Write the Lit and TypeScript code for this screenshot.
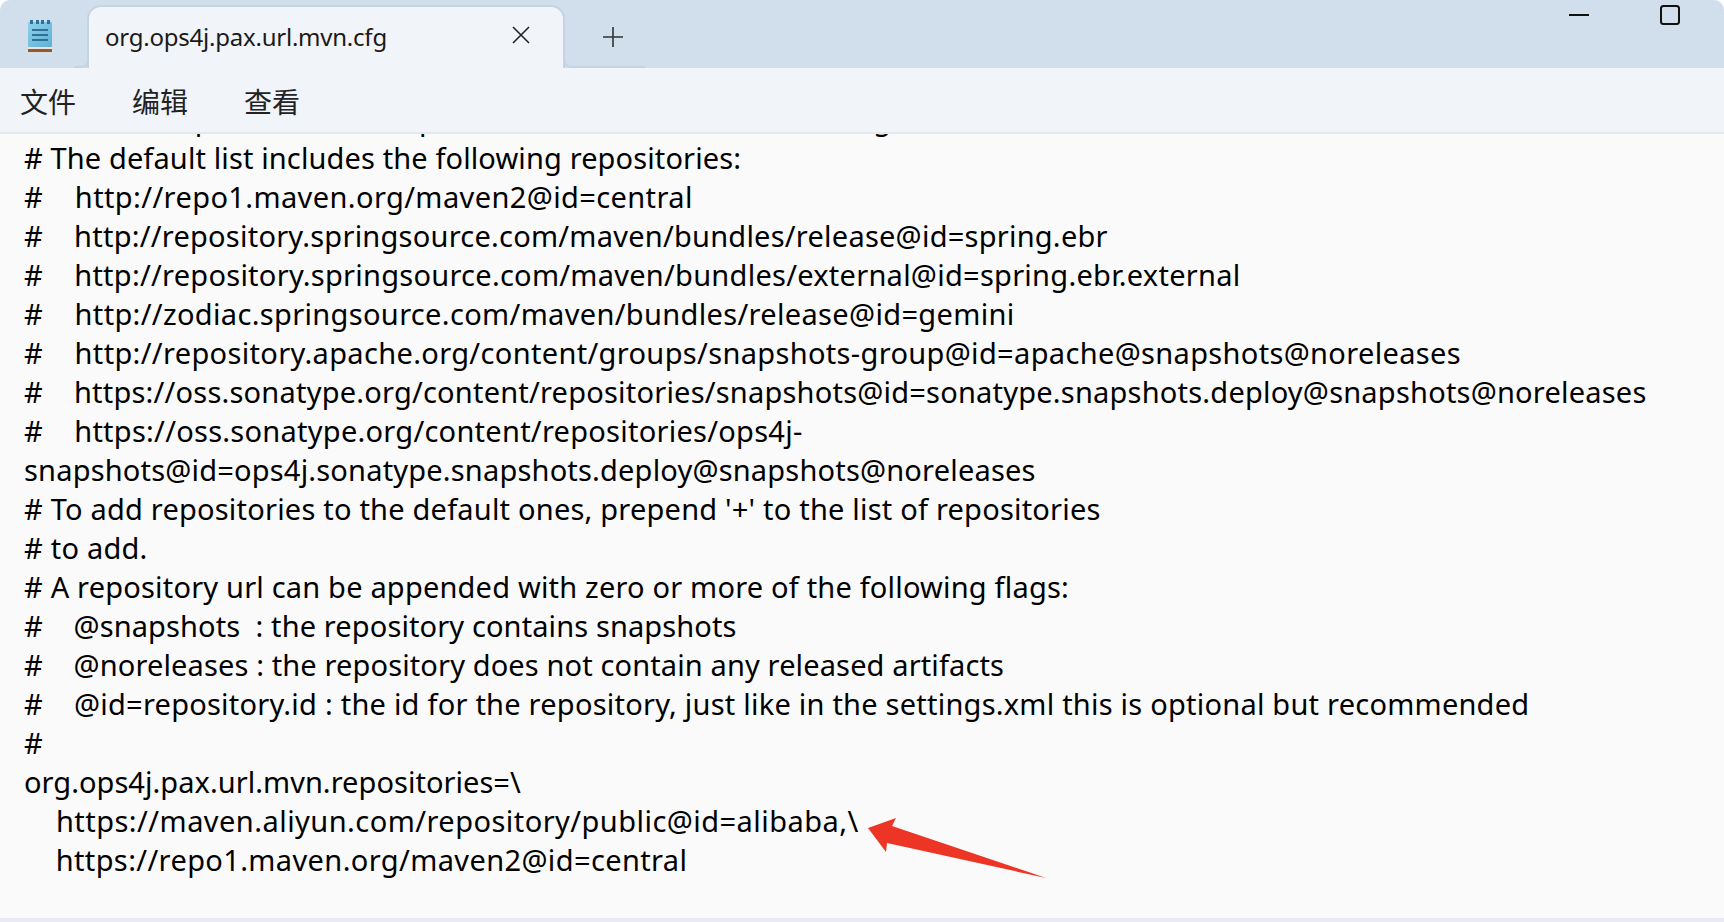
import { LitElement, html, css } from "lit";
import { customElement } from "lit/decorators.js";

const CLIPPED: [string, number] = ["# Comma separated list of repositories scanned when resolving an artifact.", 0.035];
const LINES: [string, number][] = [
  ["# The default list includes the following repositories:", 0.12],
  ["#    http://repo1.maven.org/maven2@id=central", 0.39],
  ["#    http://repository.springsource.com/maven/bundles/release@id=spring.ebr", 0.235],
  ["#    http://repository.springsource.com/maven/bundles/external@id=spring.ebr.external", 0.26],
  ["#    http://zodiac.springsource.com/maven/bundles/release@id=gemini", 0.337],
  ["#    http://repository.apache.org/content/groups/snapshots-group@id=apache@snapshots@noreleases", 0.337],
  ["#    https://oss.sonatype.org/content/repositories/snapshots@id=sonatype.snapshots.deploy@snapshots@noreleases", 0.21],
  ["#    https://oss.sonatype.org/content/repositories/ops4j-", 0.26],
  ["snapshots@id=ops4j.sonatype.snapshots.deploy@snapshots@noreleases", 0.186],
  ["# To add repositories to the default ones, prepend '+' to the list of repositories", 0.207],
  ["# to add.", 0.22],
  ["# A repository url can be appended with zero or more of the following flags:", 0.19],
  ["#    @snapshots  : the repository contains snapshots", 0.112],
  ["#    @noreleases : the repository does not contain any released artifacts", 0.127],
  ["#    @id=repository.id : the id for the repository, just like in the settings.xml this is optional but recommended", 0.23],
  ["#", 0.22],
  ["org.ops4j.pax.url.mvn.repositories=\\", 0.037],
  ["    https://maven.aliyun.com/repository/public@id=alibaba,\\", 0.456],
  ["    https://repo1.maven.org/maven2@id=central", 0.377],
];

@customElement("app-root")
export class AppRoot extends LitElement {
  static styles = css`
    :host { display: block; width: 1724px; height: 922px; background: #fff; overflow: hidden; font-family: "Noto Sans", "Noto Sans CJK SC", sans-serif; color: #111; }
    .win { position: relative; height: 922px; display: flex; flex-direction: column; border-radius: 10px 10px 0 0; overflow: hidden; background: #fafafa; }
    .titlebar { height: 68px; flex: none; background: #d1deeb; display: flex; align-items: flex-end; }
    .appicon { width: 80px; flex: none; height: 68px; display: flex; align-items: flex-start; justify-content: center; padding: 19px 0 0 0; box-sizing: border-box; }
    .tail-left { width: 15px; height: 14px; flex: none; margin-left: -6px; box-sizing: border-box; border-right: 2px solid #c6d4e2; border-bottom: 2px solid #c6d4e2; border-bottom-right-radius: 8px; }
    .tab { width: 478px; height: 63px; flex: none; margin-left: -2px; box-sizing: border-box; background: #f1f4f9; border: 2px solid #c6d4e2; border-bottom: none; border-radius: 14px 14px 0 0; display: flex; align-items: center; padding: 0 33px 2px 16px; justify-content: space-between; }
    .close { margin-bottom: 3px; }
    .tail-right { width: 82px; height: 14px; flex: none; margin-left: -2px; box-sizing: border-box; border-left: 2px solid #c6d4e2; border-bottom: 2px solid #c6d4e2; border-bottom-left-radius: 8px; }
    .tabname { font-size: 24px; letter-spacing: -0.23px; color: #1a1a1a; }
    .plus { margin-left: -42px; margin-bottom: 21px; }
    .winbtns { margin-left: auto; align-self: flex-start; display: flex; gap: 71px; padding: 5px 44px 0 0; }
    .menu { height: 66px; box-sizing: border-box; flex: none; background: #f1f4f9; display: flex; align-items: center; gap: 56px; padding: 4px 0 0 20px; font-size: 28px; line-height: 40px; border-bottom: 2px solid #e5e8ee; color: #222; }
    .content { flex: 1; overflow: hidden; background: #fafafa; border-bottom: 4px solid #e8ecf2; }
    .text { margin: 0 0 0 24px; font-size: 29px; line-height: 39px; color: #000; }
    .line { height: 39px; white-space: pre; }
    .sliver { height: 4px; overflow: hidden; display: flex; align-items: flex-end; }
    .sliver .line { flex: none; }
    .arrow { position: absolute; left: 0; top: 0; pointer-events: none; }
    svg { display: block; }
  `;

  render() {
    return html`<div class="win">
      <div class="titlebar">
        <div class="appicon">
          <svg width="26" height="34" viewBox="0 0 26 34">
            <defs><linearGradient id="g" x1="0" y1="0" x2="1" y2="1"><stop offset="0" stop-color="#8fd0ea"/><stop offset="1" stop-color="#5fb0d6"/></linearGradient></defs>
            <rect x="1" y="3" width="24" height="25" rx="1" fill="url(#g)"/>
            <g fill="#2f7096"><rect x="3" y="1" width="3" height="4"/><rect x="9" y="1" width="3" height="4"/><rect x="14" y="1" width="3" height="4"/><rect x="20" y="1" width="3" height="4"/></g>
            <g fill="#2f7096"><rect x="5" y="10" width="16" height="2"/><rect x="5" y="15" width="16" height="2"/><rect x="5" y="20" width="16" height="2"/></g>
            <rect x="1" y="28" width="24" height="2" fill="#e8e4de"/>
            <rect x="1" y="30" width="24" height="3" fill="#9c5526"/>
          </svg>
        </div>
        <div class="tail-left"></div>
        <div class="tab">
          <span class="tabname">org.ops4j.pax.url.mvn.cfg</span>
          <svg class="close" width="18" height="18" viewBox="0 0 18 18"><path d="M1 1 L17 17 M17 1 L1 17" stroke="#222" stroke-width="1.6" fill="none"/></svg>
        </div>
        <div class="tail-right"></div>
        <svg class="plus" width="20" height="20" viewBox="0 0 20 20"><path d="M10 0 V20 M0 10 H20" stroke="#333" stroke-width="1.6" fill="none"/></svg>
        <div class="winbtns">
          <svg width="20" height="20" viewBox="0 0 20 20"><rect x="0" y="9" width="20" height="2" fill="#111"/></svg>
          <svg width="20" height="20" viewBox="0 0 20 20"><rect x="1" y="1" width="18" height="18" rx="2.5" fill="none" stroke="#111" stroke-width="2"/></svg>
        </div>
      </div>
      <div class="menu"><span>文件</span><span>编辑</span><span>查看</span></div>
      <div class="content"><div class="text">
        <div class="sliver"><div class="line" style="letter-spacing:${CLIPPED[1]}px">${CLIPPED[0]}</div></div>
        ${LINES.map(([t, ls]) => html`<div class="line" style="letter-spacing:${ls}px">${t}</div>`)}
      </div></div>
      <svg class="arrow" width="1724" height="922" viewBox="0 0 1724 922"><polygon points="868,828 896,818 892,826 1046,878 887,843 886,852" fill="#ec3524"/></svg>
    </div>`;
  }
}
